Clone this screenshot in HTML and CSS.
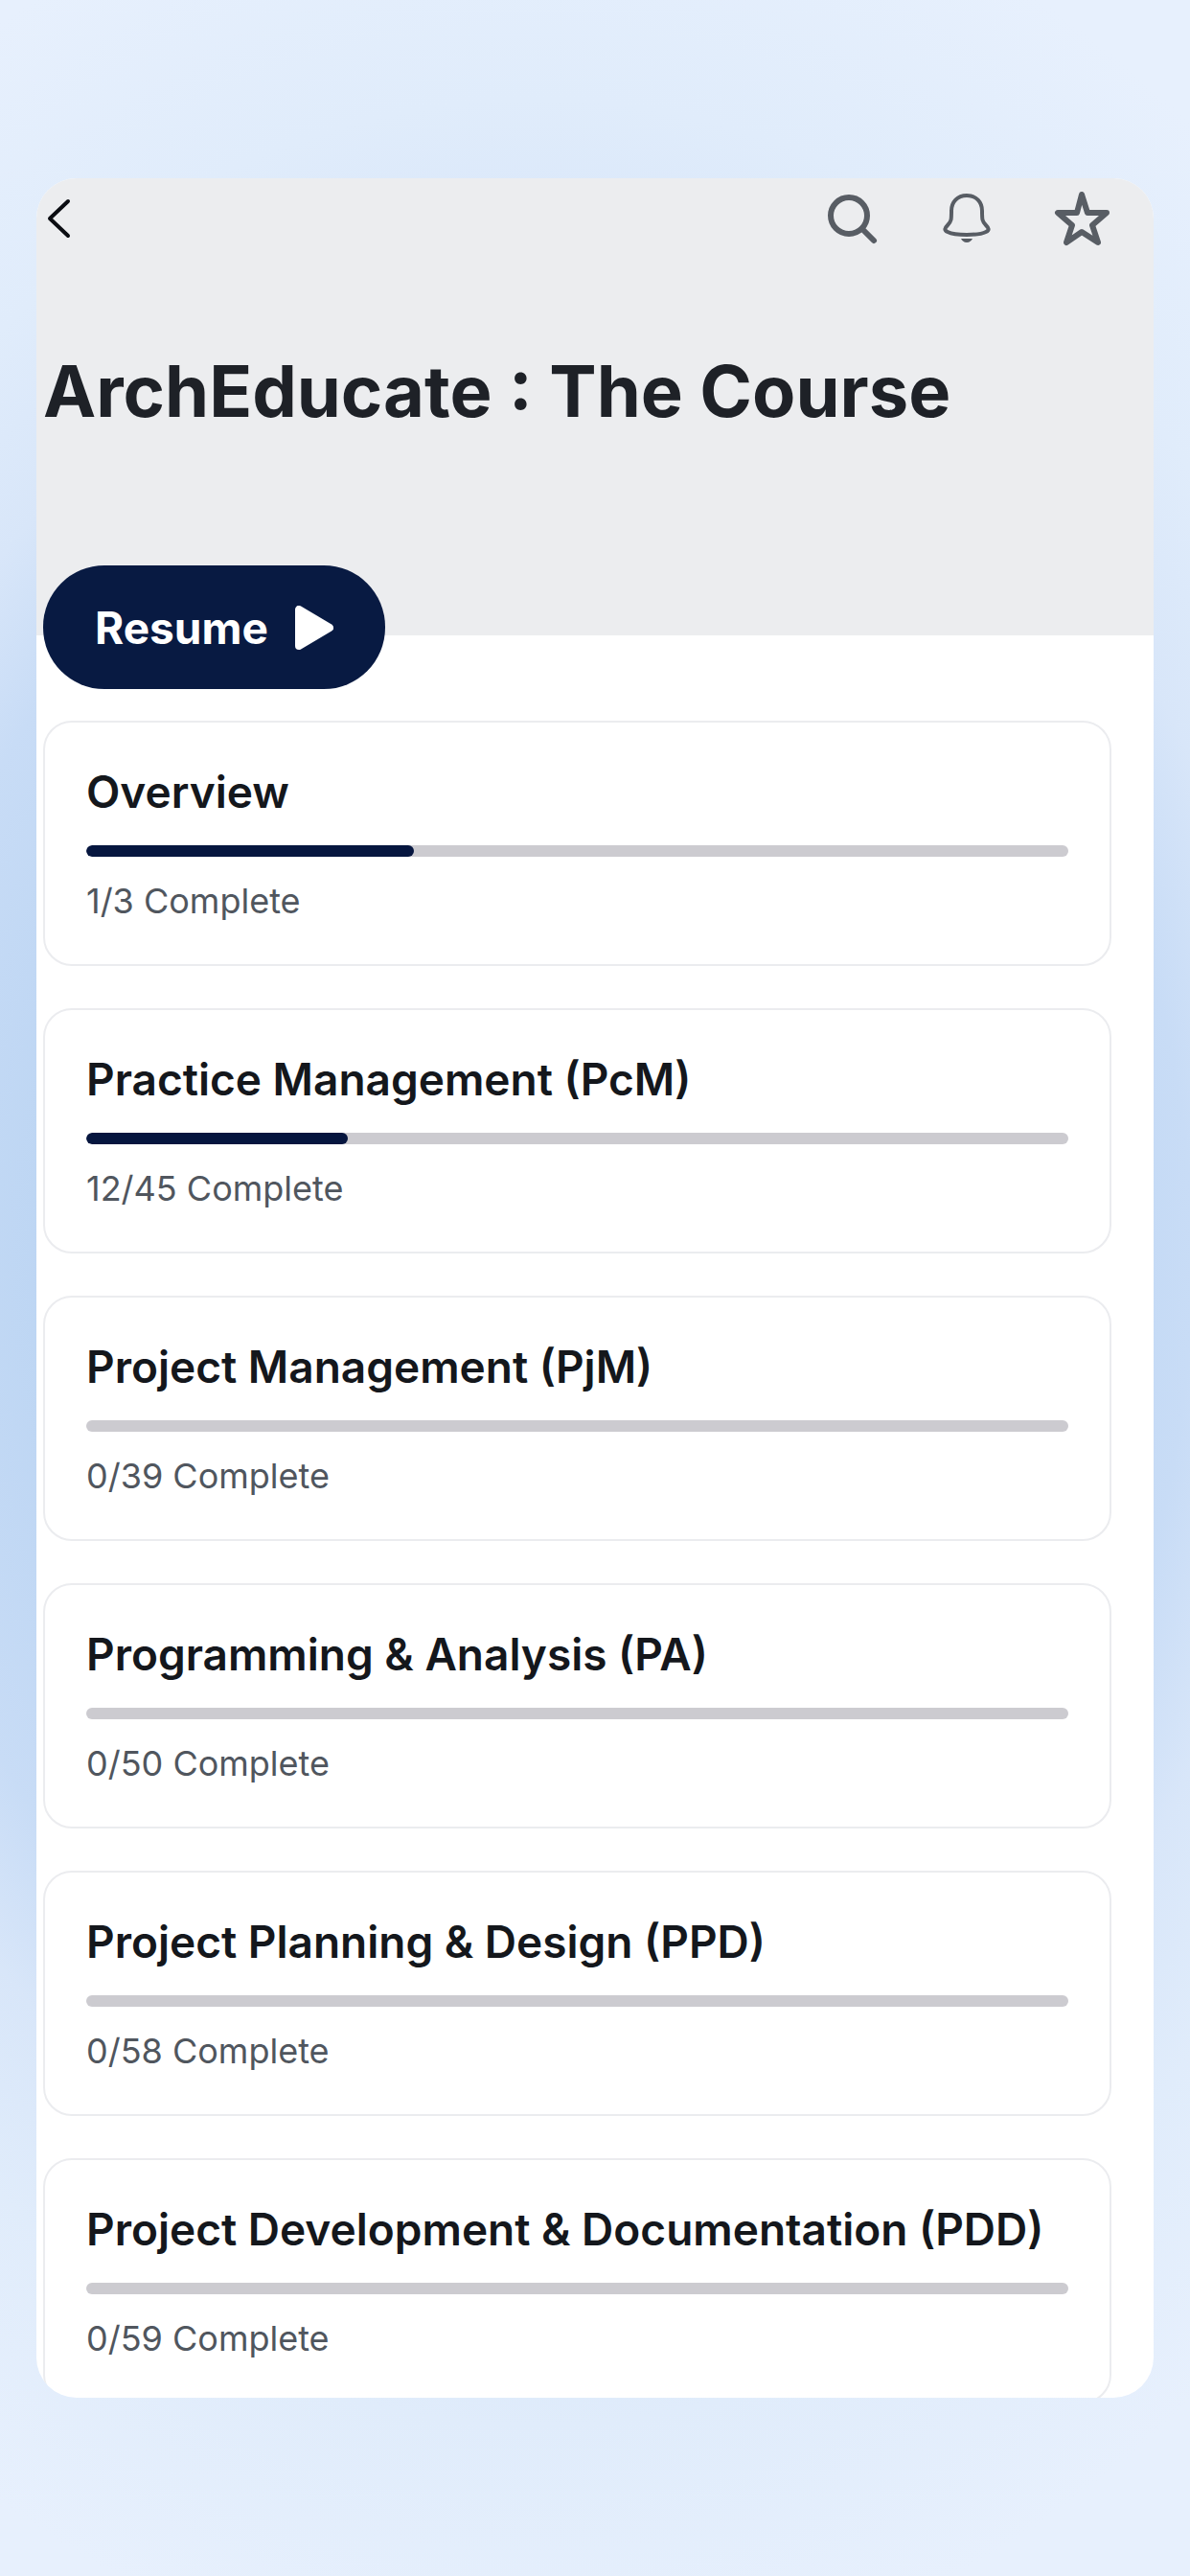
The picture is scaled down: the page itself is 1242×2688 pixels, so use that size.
FILE: index.html
```html
<!DOCTYPE html>
<html lang="en">
<head>
    <meta charset="UTF-8">
    <meta name="viewport" content="width=device-width, initial-scale=1.0">
    <title>ArchEducate : The Course</title>
    <link rel="stylesheet" href="styles.css">
</head>
<body>
    <div class="screen">
        <header class="course-header">
            <nav class="top-bar">
                <button class="icon-button back" aria-label="Back">
                    <svg viewBox="0 0 30 60"><path d="M26 12L7 30L26 48" stroke="#0b0d12" stroke-width="4"/></svg>
                </button>
                <div class="actions">
                    <button class="icon-button" aria-label="Search">
                        <svg viewBox="0 0 60 60"><circle cx="26" cy="27" r="19" stroke-width="6"/><path d="M40 41L52 53" stroke-width="6"/></svg>
                    </button>
                    <button class="icon-button" aria-label="Notifications">
                        <svg viewBox="0 0 60 60"><path d="M29 6C19 6 13 13 13 22C13 31 13 33 9 37C6 40 5 42 9 44C13 46 21 47 29 47C37 47 45 46 49 44C53 42 52 40 49 37C45 33 45 31 45 22C45 13 39 6 29 6Z" stroke-width="4"/><path class="solid" d="M23 51H35C34 53 32 55 29 55S24 53 23 51Z"/></svg>
                    </button>
                    <button class="icon-button" aria-label="Add to favorites">
                        <svg viewBox="0 0 60 60"><path d="M29 5L35 24H55L40 37L46 55L29 44L13 55L19 37L4 24H24Z" stroke-width="6"/></svg>
                    </button>
                </div>
            </nav>
            <h1>ArchEducate : The Course</h1>
            <button class="resume">
                Resume
                <svg viewBox="0 0 40 46"><path d="M4 4V42L36 23Z"/></svg>
            </button>
        </header>

        <main class="module-list">
            <section class="module">
                <h2 id="overview">Overview</h2>
                <progress value="1" max="3" aria-labelledby="overview"></progress>
                <p>1/3 Complete</p>
            </section>
            <section class="module">
                <h2 id="pcm">Practice Management (PcM)</h2>
                <progress value="12" max="45" aria-labelledby="pcm"></progress>
                <p>12/45 Complete</p>
            </section>
            <section class="module">
                <h2 id="pjm">Project Management (PjM)</h2>
                <progress value="0" max="39" aria-labelledby="pjm"></progress>
                <p>0/39 Complete</p>
            </section>
            <section class="module">
                <h2 id="pa">Programming &amp; Analysis (PA)</h2>
                <progress value="0" max="50" aria-labelledby="pa"></progress>
                <p>0/50 Complete</p>
            </section>
            <section class="module">
                <h2 id="ppd">Project Planning &amp; Design (PPD)</h2>
                <progress value="0" max="58" aria-labelledby="ppd"></progress>
                <p>0/58 Complete</p>
            </section>
            <section class="module">
                <h2 id="pdd">Project Development &amp; Documentation (PDD)</h2>
                <progress value="0" max="59" aria-labelledby="pdd"></progress>
                <p>0/59 Complete</p>
            </section>
        </main>
    </div>
</body>
</html>
```
FILE: styles.css
```css
* {
    box-sizing: border-box;
}
body {
    height: 100vh;
    margin: 0;
    padding: 186px 38px;
    font-family: Inter, "Liberation Sans", sans-serif;
    color: #14171c;
    background: radial-gradient(ellipse 80% 48% at 45% 49%, #bcd5f3 50%, #c8dcf6 69%, #d8e6f9 80%, #e0ecfb 94%, #e7f0fd 115%);
}
h1, h2, p {
    margin: 0;
}
button {
    font-family: inherit;
    border: none;
    cursor: pointer;
}
.screen {
    height: 100%;
    overflow: hidden;
    background: white;
    border-radius: 42px;
}
.course-header {
    display: flow-root;
    padding: 0 44px 0 7px;
    background: #ecedef;
}
.top-bar {
    display: flex;
    justify-content: space-between;
    align-items: center;
    height: 84px;
}
.actions {
    display: flex;
    gap: 60px;
}
.icon-button {
    width: 60px;
    height: 60px;
    padding: 0;
    background: none;
}
.icon-button svg {
    display: block;
    height: 60px;
    fill: none;
    stroke: #585d64;
    stroke-linecap: round;
    stroke-linejoin: round;
}
.icon-button .solid {
    fill: #585d64;
    stroke: none;
}
h1 {
    margin-top: 92px;
    font-size: 74px;
    line-height: 92px;
    font-weight: 700;
    color: #1e2127;
}
.resume {
    display: flex;
    align-items: center;
    gap: 28px;
    height: 129px;
    margin: 136px 0 -56px;
    padding: 0 54px;
    font-size: 46px;
    font-weight: 700;
    color: white;
    background: #081a42;
    border-radius: 64px;
}
.resume svg {
    width: 40px;
    height: 46px;
    fill: white;
    stroke: white;
    stroke-width: 8;
    stroke-linejoin: round;
}
.module-list {
    display: grid;
    gap: 44px;
    padding: 89px 44px 44px 7px;
}
.module {
    padding: 44px 43px;
    border: 2px solid #ebecef;
    border-radius: 30px;
}
h2 {
    font-size: 46px;
    line-height: 56px;
    font-weight: 600;
}
progress {
    display: block;
    appearance: none;
    width: 100%;
    height: 12px;
    margin: 28px 0 24px;
    border: none;
    border-radius: 6px;
    overflow: hidden;
    background: #cccbd0;
}
progress::-webkit-progress-bar {
    background: #cccbd0;
}
progress::-webkit-progress-value {
    background: #06163f;
    border-radius: 6px;
}
.module p {
    font-size: 36px;
    line-height: 44px;
    color: #50565e;
}
```
